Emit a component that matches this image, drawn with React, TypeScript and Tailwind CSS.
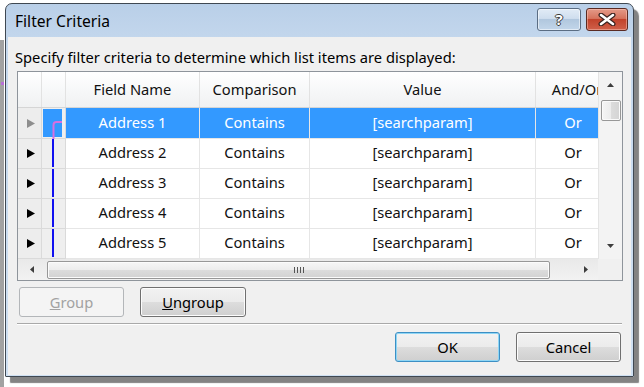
import React from "react";

const Tri = ({ color }: { color: string }) => (
  <svg width="8" height="9" viewBox="0 0 8 9">
    <polygon points="0,0 8,4.5 0,9" fill={color} />
  </svg>
);

const rowsData = [1, 2, 3, 4, 5];

function Row({ n }: { n: number }) {
  const sel = n === 1;
  const cell = sel
    ? "bg-[#3399ff] text-white"
    : "bg-white text-[#111]";
  return (
    <div className={`flex ${sel ? "h-[31px]" : "h-[30px]"}`}>
      <div className="w-[24px] shrink-0 bg-[#ededed] border-r border-b border-[#dadada] flex items-center justify-center pl-[2px]">
        <Tri color={sel ? "#8e8e8e" : "#000000"} />
      </div>
      <div className="w-[24px] shrink-0 bg-[#efefef] border-r border-b border-[#dadada] relative">
        {sel ? (
          <div className="absolute left-[1px] top-[1px] w-[19px] h-[28px] bg-[#3399ff]">
            <svg className="absolute left-0 top-0" width="20" height="30" viewBox="0 0 20 30">
              <path d="M10.5 30 V16 Q10.5 13 13.5 13 H19" stroke="#d86fe0" strokeWidth="2" fill="none" />
            </svg>
          </div>
        ) : (
          <div className="pl-[10px] h-full pb-[1px]">
            <div className="w-[2px] h-full bg-[#1010f0]" />
          </div>
        )}
      </div>
      <div className={`w-[134px] shrink-0 border-r border-b border-[#e6e6e6] flex items-center justify-center pb-[2px] ${cell}`}>
        Address {n}
      </div>
      <div className={`w-[110px] shrink-0 border-r border-b border-[#e6e6e6] flex items-center justify-center pb-[2px] ${cell}`}>
        Contains
      </div>
      <div className={`w-[226px] shrink-0 border-r border-b border-[#e6e6e6] flex items-center justify-center pb-[2px] ${cell}`}>
        [searchparam]
      </div>
      <div className={`w-[62px] shrink-0 border-b border-[#e6e6e6] overflow-hidden flex items-center pb-[2px] ${sel ? "bg-[#3399ff] text-white" : "bg-white text-[#111]"}`}>
        <div className="w-[74px] shrink-0 text-center">Or</div>
      </div>
    </div>
  );
}

export default function App() {
  return (
    <div className="w-[644px] h-[387px] bg-white relative overflow-hidden font-['Noto_Sans',sans-serif] text-[14.7px]">
      {/* background window edge on the left */}
      <div className="absolute left-0 top-[40px] w-[4px] h-[347px] bg-[#a2a2a2]" />
      <div className="absolute left-[1px] top-[82px] w-[3px] h-[3px] bg-[#b86fd8]" />

      <div className="pl-[5px] pt-[3px] relative">
        <div className="w-[629px] h-[374px] border border-[#3f4852] rounded-t-[7px] rounded-b-[1px] bg-[linear-gradient(to_bottom,#b9cfe8_0%,#c6d9ee_12%,#cfe0f2_100%)] shadow-[5px_6px_1px_rgba(90,90,90,0.75)] flex flex-col">
          {/* title bar */}
          <div className="h-[33px] shrink-0 flex">
            <div className="flex-1 pl-[9px] pt-[6px] text-[15.6px] leading-[22px] text-[#000]">Filter Criteria</div>
            <div className="flex gap-[5px] mt-[4px] mr-[5px] self-start">
              <div className="w-[44px] h-[23px] rounded-[3px] border border-[#5b6d83] bg-[linear-gradient(to_bottom,#e1ebf6_0%,#cfdeee_45%,#b1c7de_50%,#c2d6ea_100%)] shadow-[inset_0_0_0_1px_rgba(255,255,255,0.55)] flex items-center justify-center">
                <span className="text-white font-bold text-[15px] leading-none [text-shadow:1px_0_0_#3a3a3a,-1px_0_0_#3a3a3a,0_1px_0_#3a3a3a,0_-1px_0_#3a3a3a]">?</span>
              </div>
              <div className="w-[42px] h-[23px] rounded-[3px] border border-[#5a2b23] bg-[linear-gradient(to_bottom,#e49a88_0%,#d6735d_45%,#c2432c_50%,#d0604a_100%)] shadow-[inset_0_0_0_1px_rgba(255,210,200,0.45)] flex items-center justify-center">
                <svg width="18" height="13" viewBox="0 0 18 13">
                  <path d="M3 2 L15 11 M15 2 L3 11" stroke="#3b2320" strokeWidth="5" strokeLinecap="round" />
                  <path d="M3 2 L15 11 M15 2 L3 11" stroke="#ffffff" strokeWidth="2.6" strokeLinecap="round" />
                </svg>
              </div>
            </div>
          </div>

          {/* content */}
          <div className="flex-1 mx-[2px] mb-[1px] bg-[#f0f0f0] flex flex-col text-[#000]">
            <div className="pl-[7px] pt-[10px] leading-[20px] h-[30px] whitespace-nowrap">
              Specify filter criteria to determine which list items are displayed:
            </div>

            {/* grid */}
            <div className="ml-[9px] mt-[4px] w-[606px] h-[210px] border border-[#8e949b] bg-white flex flex-col">
              <div className="flex h-[187px]">
                <div className="w-[580px] flex flex-col">
                  {/* header */}
                  <div className="flex h-[36px] bg-[linear-gradient(to_bottom,#ffffff_0%,#f7f8f9_50%,#f0f1f2_100%)] border-b border-[#d5d5d5] text-[#111]">
                    <div className="w-[24px] shrink-0 border-r border-[#e2e2e2]" />
                    <div className="w-[24px] shrink-0 border-r border-[#e2e2e2]" />
                    <div className="w-[134px] shrink-0 border-r border-[#e2e2e2] flex items-center justify-center">Field Name</div>
                    <div className="w-[110px] shrink-0 border-r border-[#e2e2e2] flex items-center justify-center">Comparison</div>
                    <div className="w-[226px] shrink-0 border-r border-[#e2e2e2] flex items-center justify-center">Value</div>
                    <div className="w-[62px] shrink-0 overflow-hidden flex items-center">
                      <div className="w-[82px] shrink-0 text-center whitespace-nowrap">And/Or</div>
                    </div>
                  </div>
                  {rowsData.map((n) => (
                    <Row key={n} n={n} />
                  ))}
                </div>
                {/* vertical scrollbar */}
                <div className="w-[24px] h-[187px] bg-[#f3f3f3] border-l border-[#e4e4e4] flex flex-col items-center">
                  <div className="h-[26px] w-full flex items-center justify-center">
                    <svg width="7" height="4" viewBox="0 0 7 4"><polygon points="0,4 3.5,0 7,4" fill="#3d3d3d" /></svg>
                  </div>
                  <div className="mt-[2px] w-[20px] h-[21px] rounded-[2px] border border-[#979797] bg-[linear-gradient(to_right,#f5f5f5_0%,#ececec_50%,#dcdcdc_50%,#d4d4d4_100%)] shadow-[inset_0_0_0_1px_#fafafa]" />
                  <div className="flex-1" />
                  <div className="h-[26px] w-full flex items-center justify-center">
                    <svg width="7" height="4" viewBox="0 0 7 4"><polygon points="0,0 7,0 3.5,4" fill="#3d3d3d" /></svg>
                  </div>
                </div>
              </div>
              {/* horizontal scrollbar */}
              <div className="flex h-[21px]">
                <div className="w-[580px] h-full bg-[linear-gradient(to_bottom,#e9e9e9_0%,#f2f2f2_100%)] flex items-center">
                  <div className="w-[28px] h-full flex items-center justify-center">
                    <svg width="4" height="7" viewBox="0 0 4 7"><polygon points="4,0 4,7 0,3.5" fill="#3d3d3d" /></svg>
                  </div>
                  <div className="ml-[1px] w-[503px] h-[18px] rounded-[2px] border border-[#979797] bg-[linear-gradient(to_bottom,#f6f6f6_0%,#ececec_50%,#dcdcdc_50%,#d2d2d2_100%)] shadow-[inset_0_0_0_1px_#fbfbfb] flex items-center justify-center gap-[2px]">
                    <div className="w-[1px] h-[6px] bg-[#555]" />
                    <div className="w-[1px] h-[6px] bg-[#555]" />
                    <div className="w-[1px] h-[6px] bg-[#555]" />
                    <div className="w-[1px] h-[6px] bg-[#555]" />
                  </div>
                  <div className="flex-1" />
                  <div className="w-[24px] h-full flex items-center justify-center">
                    <svg width="4" height="7" viewBox="0 0 4 7"><polygon points="0,0 4,3.5 0,7" fill="#3d3d3d" /></svg>
                  </div>
                </div>
                <div className="w-[24px] h-full bg-[#f0f0f0]" />
              </div>
            </div>

            {/* group buttons */}
            <div className="flex mt-[6px] ml-[11px] gap-[16px]">
              <div className="w-[105px] h-[30px] rounded-[3px] border border-[#b3b6b9] bg-[#f4f4f4] text-[#a2a2a2] flex items-center justify-center">
                <span><span className="underline">G</span>roup</span>
              </div>
              <div className="w-[106px] h-[30px] rounded-[3px] border border-[#707070] bg-[linear-gradient(to_bottom,#f2f2f2_0%,#ebebeb_50%,#dddddd_50%,#cfcfcf_100%)] shadow-[inset_0_0_0_1px_#fcfcfc] flex items-center justify-center">
                <span><span className="underline">U</span>ngroup</span>
              </div>
            </div>

            {/* separator */}
            <div className="ml-[9px] mt-[6px] w-[605px] h-[2px] border-t border-[#a9a9a9] border-b border-b-white" />

            {/* OK / Cancel */}
            <div className="flex mt-[7px] ml-[387px] gap-[16px]">
              <div className="w-[105px] h-[30px] rounded-[3px] border border-[#3c8fc4] bg-[linear-gradient(to_bottom,#f2f2f2_0%,#ebebeb_50%,#dddddd_50%,#cfcfcf_100%)] shadow-[inset_0_0_0_1px_#8fd6f5] flex items-center justify-center">
                OK
              </div>
              <div className="w-[105px] h-[30px] rounded-[3px] border border-[#707070] bg-[linear-gradient(to_bottom,#f2f2f2_0%,#ebebeb_50%,#dddddd_50%,#cfcfcf_100%)] shadow-[inset_0_0_0_1px_#fcfcfc] flex items-center justify-center">
                Cancel
              </div>
            </div>
          </div>
        </div>
      </div>
    </div>
  );
}
